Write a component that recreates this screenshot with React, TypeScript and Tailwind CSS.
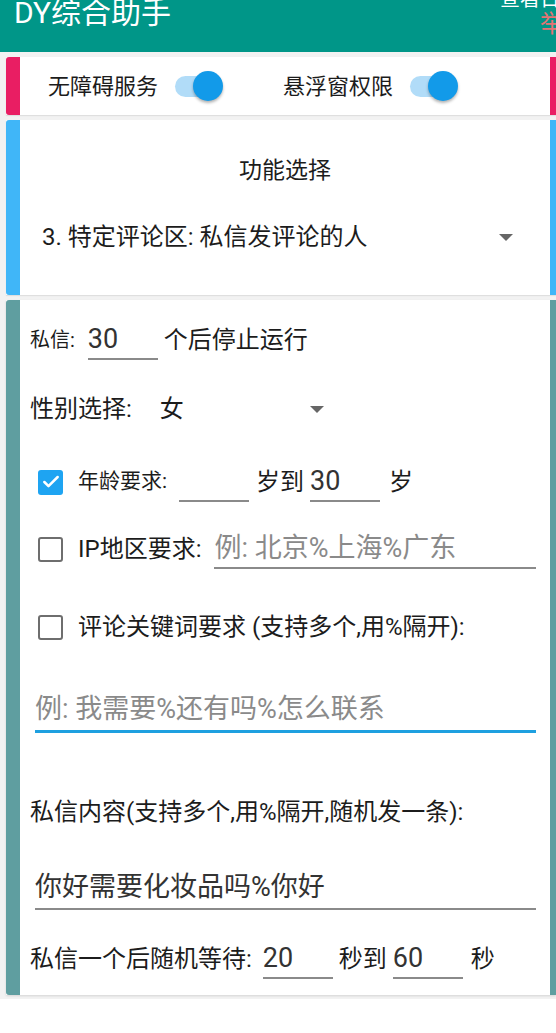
import { Check } from 'lucide-react';

function Switch() {
  return (
    <div className="relative flex h-[30px] w-[48px] shrink-0 items-center">
      <div className="h-[21px] w-[42px] rounded-full bg-[#b1dcf8]" />
      <div className="absolute right-0 top-0 h-[30px] w-[30px] rounded-full bg-[#129ae9] shadow-[0_2px_3px_rgba(0,0,0,0.3)]" />
    </div>
  );
}

function Box({ checked }: { checked?: boolean }) {
  return checked ? (
    <div className="flex h-[25px] w-[25px] shrink-0 items-center justify-center rounded-[3px] bg-[#1ea4f2]">
      <Check className="h-[20px] w-[20px] text-white" strokeWidth={3} />
    </div>
  ) : (
    <div className="h-[25px] w-[25px] shrink-0 rounded-[3px] border-[2.5px] border-[#6e6e6e]" />
  );
}

function Field({ value }: { value?: string }) {
  return (
    <div className="flex h-[40px] w-[70px] items-center border-b-2 border-[#8a8a8a] text-[27px] text-[#333]">
      {value}
    </div>
  );
}

function Triangle() {
  return <div className="h-0 w-0 border-x-[7px] border-t-[7px] border-x-transparent border-t-[#666]" />;
}

export default function App() {
  return (
    <div className="min-h-screen bg-white font-['Roboto','Noto_Sans_CJK_SC',sans-serif] text-[#1c1c1c]">
      {/* Header */}
      <div className="flex h-[52px] overflow-hidden bg-[#009688] shadow-[0_1px_2px_rgba(0,0,0,0.15)]">
        <div className="-mt-[3px] pl-[14px] text-[30px] leading-[32px] text-white">DY综合助手</div>
        <div className="ml-auto w-[56px] shrink-0 whitespace-nowrap">
          <div className="-mt-[11px] text-[20px] leading-[20px] text-white">查看日志</div>
          <div className="pl-[40px] pt-[2px] text-[24px] leading-[26px] text-[#e57373]">举报</div>
        </div>
      </div>

      <div className="bg-[#f2f2f2] pb-[4px] pl-[6px] pt-[5px]">
        {/* Permissions */}
        <div className="flex h-[58px] bg-white shadow-[0_1px_1px_rgba(0,0,0,0.08)]">
          <div className="w-[14px] rounded-l-[3px] bg-[#e91e63]" />
          <div className="flex flex-1 items-center text-[22px]">
            <span className="ml-[28px]">无障碍服务</span>
            <div className="ml-[17px]">
              <Switch />
            </div>
            <span className="ml-[60px]">悬浮窗权限</span>
            <div className="ml-[17px]">
              <Switch />
            </div>
          </div>
          <div className="w-[6px] bg-[#e91e63]" />
        </div>

        {/* Function select */}
        <div className="mt-[5px] flex h-[175px] bg-white shadow-[0_1px_1px_rgba(0,0,0,0.08)]">
          <div className="w-[14px] rounded-l-[3px] bg-[#40b6f8]" />
          <div className="flex flex-1 flex-col">
            <div className="mt-[33px] h-[36px] text-center text-[23px] leading-[36px]">功能选择</div>
            <div className="mt-[30px] flex h-[36px] items-center pl-[22px] pr-[37px] text-[24px]">
              <span>3. 特定评论区: 私信发评论的人</span>
              <div className="ml-auto">
                <Triangle />
              </div>
            </div>
          </div>
          <div className="w-[6px] bg-[#40b6f8]" />
        </div>

        {/* Settings */}
        <div className="mt-[5px] flex h-[695px] bg-white shadow-[0_1px_2px_rgba(0,0,0,0.12)]">
          <div className="w-[14px] rounded-l-[3px] bg-[#5f9ea0]" />
          <div className="flex flex-1 flex-col pl-[10px] pr-[14px]">
            <div className="mt-[20px] flex h-[40px] items-center">
              <span className="text-[20px]">私信:</span>
              <div className="ml-[13px]">
                <Field value="30" />
              </div>
              <span className="ml-[6px] text-[24px]">个后停止运行</span>
            </div>

            <div className="mt-[29px] flex h-[40px] items-center text-[24px]">
              <span>性别选择:</span>
              <span className="ml-[28px]">女</span>
              <div className="ml-[126px]">
                <Triangle />
              </div>
            </div>

            <div className="mt-[33px] flex h-[40px] items-center pl-[8px]">
              <Box checked />
              <span className="ml-[15px] text-[21px]">年龄要求:</span>
              <div className="ml-[12px]">
                <Field />
              </div>
              <span className="ml-[7px] text-[24px]">岁到</span>
              <div className="ml-[6px]">
                <Field value="30" />
              </div>
              <span className="ml-[9px] text-[24px]">岁</span>
            </div>

            <div className="mt-[27px] flex h-[40px] items-center pl-[8px]">
              <Box />
              <span className="ml-[15px] text-[24px]">IP地区要求:</span>
              <div className="ml-[13px] flex h-[40px] flex-1 items-center border-b-2 border-[#8a8a8a] text-[27px] text-[#8a8a8a]">
                例: 北京%上海%广东
              </div>
            </div>

            <div className="mt-[38px] flex h-[40px] items-center pl-[8px]">
              <Box />
              <span className="ml-[15px] text-[24px]">评论关键词要求 (支持多个,用%隔开):</span>
            </div>

            <div className="ml-[5px] mt-[42px] flex h-[44px] items-center border-b-[3px] border-[#1ea0e0] text-[27px] text-[#8a8a8a]">
              例: 我需要%还有吗%怎么联系
            </div>

            <div className="mt-[59px] flex h-[40px] items-center text-[24px]">私信内容(支持多个,用%隔开,随机发一条):</div>

            <div className="ml-[5px] mt-[34px] flex h-[44px] items-center border-b-2 border-[#8a8a8a] text-[27px] text-[#333]">
              你好需要化妆品吗%你好
            </div>

            <div className="mt-[29px] flex h-[40px] items-center text-[24px]">
              <span>私信一个后随机等待:</span>
              <div className="ml-[11px]">
                <Field value="20" />
              </div>
              <span className="ml-[6px]">秒到</span>
              <div className="ml-[6px]">
                <Field value="60" />
              </div>
              <span className="ml-[8px]">秒</span>
            </div>
          </div>
          <div className="w-[6px] bg-[#5f9ea0]" />
        </div>
      </div>
    </div>
  );
}
